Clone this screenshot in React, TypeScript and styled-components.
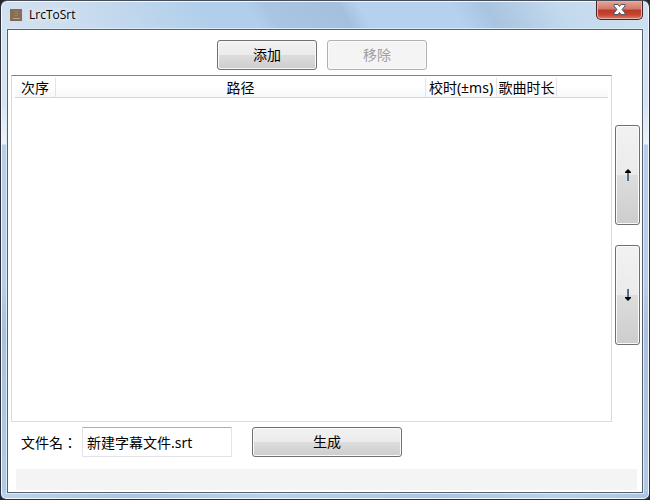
import React, { useState } from "react";
import styled, { createGlobalStyle } from "styled-components";

const GlobalStyle = createGlobalStyle`
  *, *::before, *::after { box-sizing: border-box; }
  html, body, #root { height: 100%; margin: 0; }
  body {
    background: #23262e;
    color: #000;
    font: 14px/20px "Noto Sans", "Noto Sans CJK SC", sans-serif;
    overflow: hidden;
  }
  button, input { font: inherit; color: inherit; }
`;

const WindowFrame = styled.div`
  height: 100%;
  display: flex;
  flex-direction: column;
  padding: 0 6px 6px;
  border: 1px solid #2b303a;
  border-top-color: #464c58;
  border-radius: 7px 7px 6px 6px;
  box-shadow: inset 0 0 0 1px #f2f8fd;
  background:
    linear-gradient(90deg, #bcd3ec, #a9c5e3 20%, #b6d2ee 42%, #a9c5e3 68%, #b6d2ee 85%, #a9c5e3) bottom / 100% 7px no-repeat,
    linear-gradient(60deg, #d3e2f1 0, #c9dbee 14%, #b1cfeb 32%, #b1cfeb 39%, #a9c5e2 42%, #a5c0de 53%, #b5d1ed 56%, #b5d1ed 70%, #a9c4e0 75%, #c3d9ed 86%, #cfe1f1 100%) top / 100% 30px no-repeat,
    linear-gradient(#d3e2f1 30px, #d6e2f3 100px, #eef2f8 143px, #b8cfeb 144px, #b8cfeb 280px, #a9c1de 330px, #b1cae5 100%);
`;

const TitleBar = styled.header`
  height: 28px;
  flex: none;
  display: flex;
  align-items: flex-start;
  padding-left: 3px;
`;

const AppIcon = styled.svg`
  width: 12px;
  height: 12px;
  margin-top: 8px;
  flex: none;
`;

const Title = styled.h1`
  flex: 1;
  margin: 5px 0 0 7px;
  font: 12px/18px "Open Sans", "Noto Sans", sans-serif;
  text-shadow: 0 0 8px #fff, 0 0 8px #fff;
`;

const CloseButton = styled.button`
  width: 47px;
  height: 19px;
  padding: 0 0 1px;
  display: flex;
  align-items: center;
  justify-content: center;
  border: 1px solid #48222a;
  border-top: 0;
  border-radius: 0 0 5px 5px;
  box-shadow: inset 0 0 0 1px #eab0a6;
  background: linear-gradient(#e6a598, #d07869 45%, #b93a26 50%, #c44430 75%, #dc8064);
`;

const Client = styled.main`
  flex: 1;
  min-height: 0;
  display: flex;
  flex-direction: column;
  padding: 10px 1px 2px 3px;
  border: 1px solid #55606d;
  outline: 1px solid #dcecf9;
  background: #fff;
`;

const Toolbar = styled.div`
  display: flex;
  justify-content: center;
  gap: 10px;
  padding-right: 8px;
`;

const PushButton = styled.button<{ $wide?: boolean; $tall?: boolean }>`
  flex: none;
  width: ${(p) => (p.$tall ? "25px" : p.$wide ? "150px" : "100px")};
  height: ${(p) => (p.$tall ? "100px" : "30px")};
  padding: 0;
  border: 1px solid #707070;
  border-radius: 3px;
  box-shadow: inset 0 0 0 1px #fafafa;
  background: linear-gradient(#f2f2f2, #ebebeb 50%, #dddddd 50%, #cdcdcd);

  &:disabled {
    color: #a0a0a0;
    border-color: #adb2b5;
    background: #f4f4f4;
  }
`;

const Body = styled.div`
  flex: 1;
  min-height: 0;
  display: flex;
  gap: 3px;
  margin-top: 5px;
`;

const ListView = styled.div`
  flex: 1;
  min-width: 0;
  padding: 2px 3px;
  border: 1px solid #cde0ea;
  border-top-color: #688caf;
  overflow: hidden;
`;

const SongTable = styled.table`
  width: 100%;
  table-layout: fixed;
  border-collapse: separate;
  border-spacing: 0;
`;

const Column = styled.col<{ $width?: number }>`
  width: ${(p) => (p.$width ? `${p.$width}px` : "auto")};
`;

const HeadCell = styled.th`
  height: 20px;
  padding: 0;
  font-weight: 400;
  line-height: 19px;
  text-align: center;
  white-space: nowrap;
  border-bottom: 1px solid #d5d5d5;
  border-right: 1px solid #e3e4e6;
  background: linear-gradient(#fff 40%, #f7f8fa);

  &:last-child { border-right: 0; }
`;

const OrderButtons = styled.div`
  display: flex;
  flex-direction: column;
  gap: 20px;
  padding: 50px 1px 0 0;
`;

const Form = styled.form`
  display: flex;
  align-items: center;
  margin: 5px 0 0 10px;
`;

const FieldLabel = styled.label`
  width: 61px;
  flex: none;
  white-space: nowrap;
  font-family: "Noto Sans CJK TC", sans-serif;
`;

const FileInput = styled.input`
  width: 150px;
  height: 30px;
  margin-right: 20px;
  padding: 0 4px;
  border: 1px solid #e2e3ea;
  border-top-color: #abadb3;
  border-radius: 1px;
  background: #fff;
  outline: 0;
`;

const StatusBar = styled.footer`
  height: 21px;
  flex: none;
  margin: 12px 4px 0 5px;
  background: #f4f4f4;
`;

const ArrowIcon = styled.svg<{ $down?: boolean }>`
  display: block;
  margin: 0 auto;
  transform: ${(p) => (p.$down ? "rotate(180deg)" : "none")};
`;

function Arrow({ down }: { down?: boolean }) {
  return (
    <ArrowIcon $down={down} width="8" height="12" viewBox="0 0 8 12" aria-hidden="true">
      <path d="M3.5 2v10" stroke={down ? "#4a6a86" : "#9b6a31"} />
      <path d="M4.5 2v10" stroke={down ? "#9b6a31" : "#4a6a86"} />
      <path d="M4 0 7 3v1H1V3Z" fill="#000" />
    </ArrowIcon>
  );
}

export default function App() {
  const [fileName, setFileName] = useState("新建字幕文件.srt");
  return (
    <>
      <GlobalStyle />
      <WindowFrame>
        <TitleBar>
          <AppIcon viewBox="0 0 12 12" aria-hidden="true">
            <path d="M0 0h12v12H0Z" fill="#876d55" />
            <path d="M4.5 2.5h3v2h-3m3 0v2h-3" fill="none" stroke="#94806f" />
            <path d="M3 9.5h7" stroke="#b0a294" />
            <path d="M2 11.5h9" stroke="#7a6450" />
          </AppIcon>
          <Title>LrcToSrt</Title>
          <CloseButton type="button" aria-label="关闭">
            <svg width="13" height="11" viewBox="0 0 13 11" aria-hidden="true">
              <path
                d="M1 .5h4L6.5 2.5 8 .5h4v1.5L9 5.5 12 9v1.5H8L6.5 8.5 5 10.5H1V9L4 5.5 1 2Z"
                fill="#fff"
                stroke="#535666"
              />
            </svg>
          </CloseButton>
        </TitleBar>
        <Client>
          <Toolbar>
            <PushButton type="button">添加</PushButton>
            <PushButton type="button" disabled>移除</PushButton>
          </Toolbar>
          <Body>
            <ListView>
              <SongTable>
                <colgroup>
                  <Column $width={41} />
                  <Column $width={370} />
                  <Column $width={71} />
                  <Column $width={60} />
                  <Column />
                </colgroup>
                <thead>
                  <tr>
                    <HeadCell scope="col">次序</HeadCell>
                    <HeadCell scope="col">路径</HeadCell>
                    <HeadCell scope="col">校时(±ms)</HeadCell>
                    <HeadCell scope="col">歌曲时长</HeadCell>
                    <HeadCell aria-hidden="true" />
                  </tr>
                </thead>
                <tbody />
              </SongTable>
            </ListView>
            <OrderButtons>
              <PushButton $tall type="button" aria-label="上移"><Arrow /></PushButton>
              <PushButton $tall type="button" aria-label="下移"><Arrow down /></PushButton>
            </OrderButtons>
          </Body>
          <Form onSubmit={(e) => e.preventDefault()}>
            <FieldLabel htmlFor="file-name">文件名：</FieldLabel>
            <FileInput
              id="file-name"
              type="text"
              value={fileName}
              onChange={(e) => setFileName(e.target.value)}
            />
            <PushButton $wide type="submit">生成</PushButton>
          </Form>
          <StatusBar />
        </Client>
      </WindowFrame>
    </>
  );
}
